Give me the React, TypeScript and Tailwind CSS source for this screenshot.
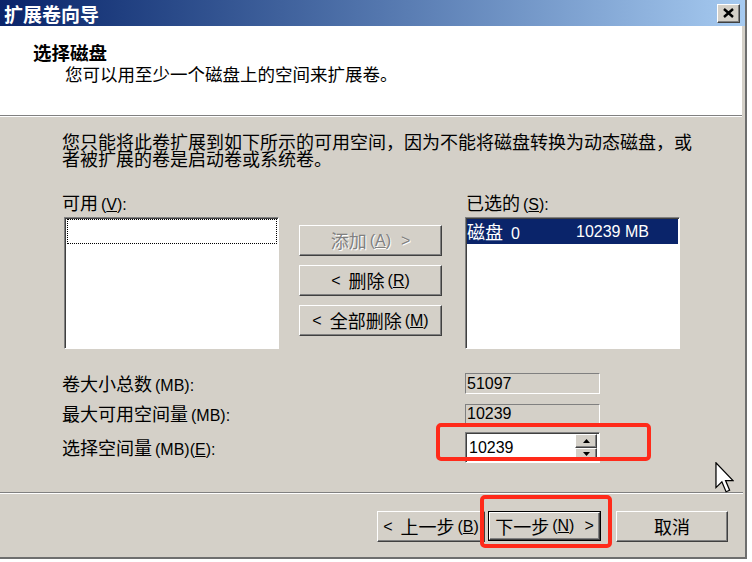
import React from 'react';

// Latin text uses a narrower, smaller face than the CJK text around it
function L({ children, className = '' }: { children: React.ReactNode; className?: string }) {
  return <span className={`font-['Liberation_Sans',sans-serif] text-[16px] ${className}`}>{children}</span>;
}

const raised =
  'bg-[#d4d0c8] border border-t-white border-l-white border-r-[#404040] border-b-[#404040] shadow-[inset_-1px_-1px_0_#808080]';
const sunken =
  'border border-t-[#808080] border-l-[#808080] border-r-white border-b-white shadow-[inset_1px_1px_0_#404040]';
const sunkenFlat = 'border border-t-[#808080] border-l-[#808080] border-r-white border-b-white';

type BtnProps = {
  children: React.ReactNode;
  disabled?: boolean;
  className?: string;
};

function Btn({ children, disabled, className = '' }: BtnProps) {
  return (
    <div
      className={`flex h-[31px] items-center justify-center whitespace-nowrap ${raised} ${
        disabled ? 'text-[#808080] [text-shadow:1px_1px_0_#fff]' : ''
      } ${className}`}
    >
      {children}
    </div>
  );
}

function Arrow({ up }: { up?: boolean }) {
  return (
    <svg width="7" height="4" viewBox="0 0 7 4">
      <path d={up ? 'M3.5 0L7 4H0Z' : 'M0 0H7L3.5 4Z'} fill="black" />
    </svg>
  );
}

export default function App() {
  return (
    <div className="relative h-[562px] w-[752px] overflow-hidden bg-white font-['Noto_Sans_CJK_SC',sans-serif] text-[18px] text-black">
      <div className="flex h-[559px] w-[747px] flex-col border-r-2 border-b-2 border-[#6e6e6e] bg-[#d4d0c8]">
        {/* title bar */}
        <div className="flex h-[26px] shrink-0 items-center justify-between bg-linear-to-r from-[#0a246a] to-[#a6caf0] pl-[4px] pr-[5px]">
          <span className="text-[19px] font-bold leading-none text-white">扩展卷向导</span>
          <div className={`flex h-[19px] w-[23px] items-center justify-center ${raised}`}>
            <svg width="11" height="10" viewBox="0 0 11 10">
              <path d="M1 1L10 9M10 1L1 9" stroke="black" strokeWidth="2.4" />
            </svg>
          </div>
        </div>

        {/* header */}
        <div className="mr-[3px] h-[89px] shrink-0 bg-white pl-[33px] pt-[15px]">
          <div className="text-[18.5px] font-bold leading-[22px]">选择磁盘</div>
          <div className="pl-[32px] text-[17.5px] leading-[22px]">您可以用至少一个磁盘上的空间来扩展卷。</div>
        </div>
        <div className="mr-[3px] h-px shrink-0 bg-[#808080]" />
        <div className="mr-[3px] h-px shrink-0 bg-white" />

        {/* body */}
        <div className="h-[375px] shrink-0 pl-[62px] pt-[16px]">
          <p className="whitespace-nowrap leading-[17px]">
            您只能将此卷扩展到如下所示的可用空间，因为不能将磁盘转换为动态磁盘，或
            <br />
            者被扩展的卷是启动卷或系统卷。
          </p>

          <div className="mt-[25px] flex">
            <div className="w-[217px]">
              <div className="h-[20px] leading-[20px]">
                可用<L className="ml-[3px]">(<u>V</u>):</L>
              </div>
              <div className={`ml-[2px] mt-[5px] h-[132px] w-[215px] bg-white p-[1px] ${sunken}`}>
                <div className="ml-[1px] h-[25px] border border-dotted border-black" />
              </div>
            </div>

            <div className="ml-[20px] flex w-[143px] flex-col gap-[9px] pt-[33px]">
              <Btn disabled>
                添加<L className="ml-[3px]">(<u>A</u>)</L>
                <L className="ml-[10px]">&gt;</L>
              </Btn>
              <Btn>
                <L className="mr-[8px]">&lt;</L>删除<L className="ml-[3px]">(<u>R</u>)</L>
              </Btn>
              <Btn>
                <L className="mr-[8px]">&lt;</L>全部删除<L className="ml-[3px]">(<u>M</u>)</L>
              </Btn>
            </div>

            <div className="ml-[23px] w-[215px]">
              <div className="h-[20px] pl-[1px] leading-[20px]">
                已选的<L className="ml-[3px]">(<u>S</u>):</L>
              </div>
              <div className={`mt-[5px] h-[132px] bg-white p-[1px] ${sunken}`}>
                <div className="flex h-[25px] items-center whitespace-nowrap bg-[#0a246a] leading-none text-white">
                  <span className="w-[109px]">
                    磁盘<L className="ml-[8px]">0</L>
                  </span>
                  <L>10239 MB</L>
                </div>
              </div>
            </div>
          </div>

          <div className="mt-[24px] flex h-[21px] items-center">
            <div className="w-[403px]">
              卷大小总数<L className="ml-[3px]">(MB):</L>
            </div>
            <div className={`flex h-[21px] w-[135px] items-center pl-[1px] ${sunkenFlat}`}>
              <L>51097</L>
            </div>
          </div>
          <div className="mt-[10px] flex h-[20px] items-center">
            <div className="w-[403px]">
              最大可用空间量<L className="ml-[3px]">(MB):</L>
            </div>
            <div className={`flex h-[20px] w-[135px] items-center pl-[1px] ${sunkenFlat}`}>
              <L>10239</L>
            </div>
          </div>
          <div className="mt-[8px] flex h-[31px] items-center">
            <div className="w-[403px]">
              选择空间量<L className="ml-[3px]">(MB)(<u>E</u>):</L>
            </div>
            <div className={`flex h-[31px] w-[135px] bg-white p-[1px] pr-[2px] ${sunken}`}>
              <div className="flex flex-1 items-center pl-[2px]">
                <L>10239</L>
              </div>
              <div className="flex w-[22px] flex-col">
                <div className={`flex flex-1 items-center justify-center ${raised}`}>
                  <Arrow up />
                </div>
                <div className={`flex flex-1 items-center justify-center ${raised}`}>
                  <Arrow />
                </div>
              </div>
            </div>
          </div>
        </div>

        <div className="mr-[2px] h-px shrink-0 bg-[#808080]" />
        <div className="mr-[2px] h-px shrink-0 bg-white" />

        {/* footer buttons */}
        <div className="flex flex-1 items-start pt-[17px]">
          <Btn className="ml-[377px] h-[30px] w-[108px]">
            <L className="mr-[8px]">&lt;</L>上一步<L className="ml-[3px]">(<u>B</u>)</L>
          </Btn>
          <div className="ml-[3px] h-[30px] w-[113px] border border-black">
            <Btn className="h-full w-full">
              下一步<L className="ml-[3px]">(<u>N</u>)</L>
              <L className="ml-[10px]">&gt;</L>
            </Btn>
          </div>
          <Btn className="ml-[15px] h-[30px] w-[112px]">取消</Btn>
        </div>
      </div>

      {/* annotation boxes */}
      <div className="absolute left-[436px] top-[423px] h-[38px] w-[215px] rounded-[5px] border-[4px] border-[#ff2a1a]" />
      <div className="absolute left-[480px] top-[495px] h-[53px] w-[132px] rounded-[5px] border-[4px] border-[#ff2a1a]" />

      {/* mouse pointer */}
      <svg className="absolute left-[715px] top-[462px]" width="19" height="31" viewBox="0 0 12 20">
        <path d="M0.5 0.5V16.5L4.3 12.8L7 19.2L9.3 18.2L6.7 12H11.5Z" fill="white" stroke="black" strokeWidth="0.8" strokeLinejoin="miter" />
      </svg>
    </div>
  );
}
